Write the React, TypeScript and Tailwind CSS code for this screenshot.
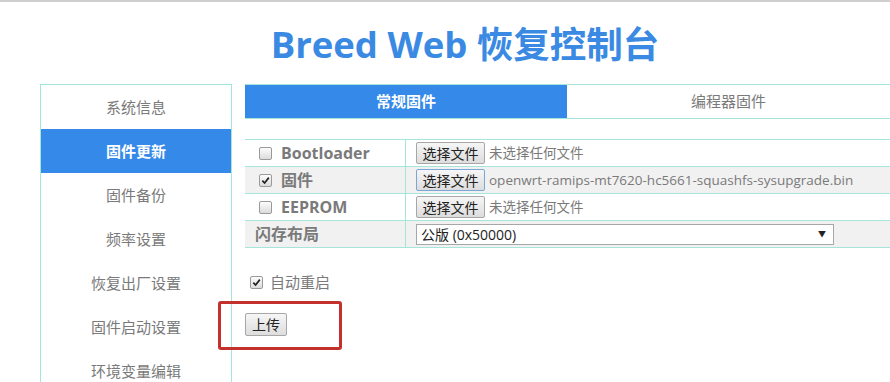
import { useState } from "react"

const menu = ["系统信息", "固件更新", "固件备份", "频率设置", "恢复出厂设置", "固件启动设置", "环境变量编辑"]

const cjk = "font-['Open_Sans','Noto_Sans_CJK_SC',sans-serif]"

function Check({ checked }: { checked: boolean }) {
  return (
    <span className="inline-flex h-[13px] w-[13px] items-center justify-center rounded-[2px] border border-[#9a9a9a] bg-gradient-to-b from-[#fcfcfc] to-[#dcdcdc]">
      {checked && (
        <svg viewBox="0 0 10 10" className="h-[9px] w-[9px]">
          <path d="M1.5 5.2 L4 7.8 L8.7 1.8" fill="none" stroke="#222" strokeWidth="1.9" />
        </svg>
      )}
    </span>
  )
}

function FileButton({ focused }: { focused?: boolean }) {
  return (
    <span
      className={`inline-flex h-[22px] w-[69px] items-center justify-center rounded-[2px] border bg-gradient-to-b from-[#f6f6f6] to-[#dddddd] text-[14px] text-[#222] ${
        focused ? "border-[#7aa7d8]" : "border-[#a7a7a7]"
      }`}
    >
      选择文件
    </span>
  )
}

const rows = [
  { label: "Bootloader", checked: false, file: "未选择任何文件", gray: false, focused: false },
  { label: "固件", checked: true, file: "openwrt-ramips-mt7620-hc5661-squashfs-sysupgrade.bin", gray: true, focused: true },
  { label: "EEPROM", checked: false, file: "未选择任何文件", gray: false, focused: false },
]

export default function App() {
  const [active] = useState(1)

  return (
    <div className={`relative h-[382px] w-[890px] overflow-hidden border-t-2 border-[#cfcfcf] bg-white ${cjk}`}>
      <h1 className="mt-[18px] pl-[40px] text-center text-[36.5px] font-bold leading-[48px] text-[#3a8ae4]">
        Breed Web 恢复控制台
      </h1>

      <div className="mt-[16px] flex gap-[13px] pl-[40px]">
        {/* Sidebar */}
        <div className="w-[192px] shrink-0 border border-[#a6e6da] pb-[40px]">
          {menu.map((item, i) => (
            <div
              key={item}
              className={`flex h-[44px] items-center justify-center text-[15px] ${
                i === active ? "bg-[#3589e8] font-bold text-white" : "text-[#7a7a7a]"
              }`}
            >
              {item}
            </div>
          ))}
        </div>

        {/* Main */}
        <div className="w-[645px] shrink-0">
          <div className="flex h-[35px] border-y border-[#a6e6da]">
            <div className="flex w-[322px] items-center justify-center bg-[#3589e8] text-[15px] font-bold text-white">
              常规固件
            </div>
            <div className="flex flex-1 items-center justify-center text-[15px] text-[#7a7a7a]">
              编程器固件
            </div>
          </div>

          <div className="mt-[20px] border-t border-[#a6e6da]">
            {rows.map((r) => (
              <div key={r.label} className={`flex h-[27px] border-b border-[#a6e6da] ${r.gray ? "bg-[#f1f1f1]" : ""}`}>
                <div className="flex w-[161px] items-center gap-[9px] border-r border-[#a6e6da] pl-[14px]">
                  <Check checked={r.checked} />
                  <span className="text-[16px] font-bold text-[#7a7a7a]">{r.label}</span>
                </div>
                <div className="flex flex-1 items-center gap-[4px] pl-[10px]">
                  <FileButton focused={r.focused} />
                  <span className="text-[13.5px] text-[#7a7a7a]">{r.file}</span>
                </div>
              </div>
            ))}
            <div className="flex h-[27px] border-b border-[#a6e6da] bg-[#f1f1f1]">
              <div className="flex w-[161px] items-center border-r border-[#a6e6da] pl-[10px]">
                <span className="text-[16px] font-bold text-[#7a7a7a]">闪存布局</span>
              </div>
              <div className="flex flex-1 items-center pl-[10px]">
                <div className="flex h-[21px] w-[418px] items-center justify-between border border-[#a7a7a7] bg-white pl-[4px] pr-[7px] text-[14px] text-[#222]">
                  <span>公版 (0x50000)</span>
                  <span className="text-[8px]">▼</span>
                </div>
              </div>
            </div>
          </div>

          <div className="mt-[23px] flex items-center gap-[7px] pl-[5px]">
            <Check checked />
            <span className="text-[15px] text-[#7a7a7a]">自动重启</span>
          </div>

          <div className="mt-[18px]">
            <span className="inline-flex h-[23px] w-[42px] items-center justify-center rounded-[2px] border border-[#a7a7a7] bg-gradient-to-b from-[#f6f6f6] to-[#dddddd] text-[14px] text-[#222]">
              上传
            </span>
          </div>
        </div>
      </div>

      {/* red highlight */}
      <div className="pointer-events-none absolute left-[218px] top-[299px] h-[49px] w-[124px] rounded-[3px] border-[3px] border-[#c4302b]" />
    </div>
  )
}
